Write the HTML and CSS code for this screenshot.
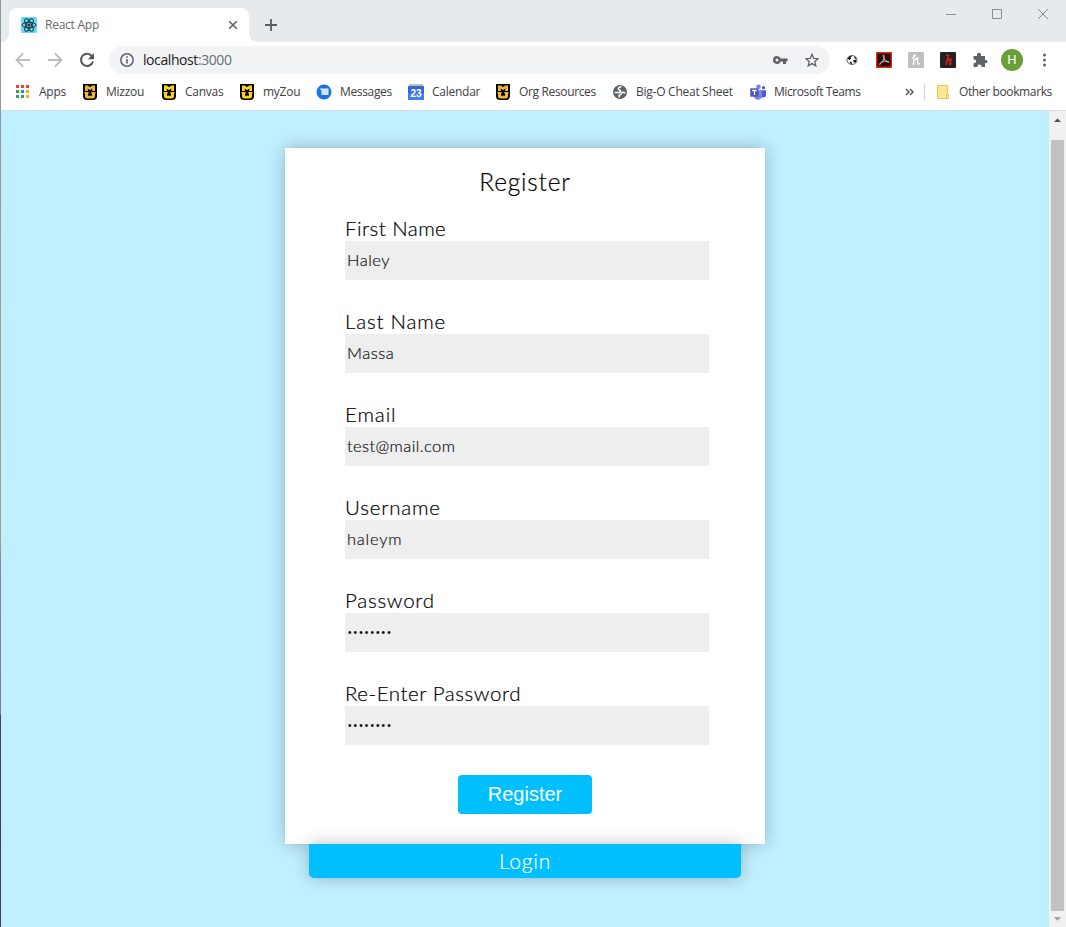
FILE: index.html
```html
<!DOCTYPE html>
<html lang="en">
<head>
<meta charset="utf-8">
<title>React App</title>
<link rel="stylesheet" href="styles.css">
</head>
<body>
<svg class="defs" width="0" height="0">
  <symbol id="mu" viewBox="0 0 16 16">
    <path d="M1 0h14v12q0 4-4 4H5q-4 0-4-4z" fill="#050505"/>
    <path d="M3 1.500h2.800L8 3.300l2.200-1.800H13V7h-2.800V4.600L8 6.300 5.800 4.600V7H3zM2.500 8h4.200v1.600H6v2.200h4V9.600h-.7V8h4.200v1.600H13V12q0 2.500-2.500 2.500h-5Q3 14.500 3 12V9.600h-.5z" fill="currentColor"/>
  </symbol>
</svg>
<div class="window">
  <header class="tabstrip">
    <div class="tab">
      <svg class="favicon" width="16" height="16" viewBox="0 0 16 16"><rect width="16" height="16" rx="1.500" fill="#61dafb"/><g fill="none" stroke="#222f38" stroke-width="1"><ellipse cx="8" cy="8" rx="7" ry="2.700"/><ellipse cx="8" cy="8" rx="7" ry="2.700" transform="rotate(60 8 8)"/><ellipse cx="8" cy="8" rx="7" ry="2.700" transform="rotate(120 8 8)"/></g><circle cx="8" cy="8" r="1.500" fill="#222f38"/></svg>
      <span class="tab-title">React App</span>
      <svg class="tab-close" width="10" height="10" viewBox="0 0 10 10"><path d="M1.200 1.200l7.600 7.600M8.800 1.200L1.200 8.800" stroke="#5f6368" stroke-width="1.600"/></svg>
    </div>
    <svg class="new-tab" width="12" height="12" viewBox="0 0 12 12"><path d="M6 0v12M0 6h12" stroke="#5a5e62" stroke-width="1.800"/></svg>
    <div class="window-buttons">
      <svg width="11" height="11" viewBox="0 0 11 11"><path d="M0 5.500h10" stroke="#8b8e90"/></svg>
      <svg width="11" height="11" viewBox="0 0 11 11"><path d="M.5.500h9v9h-9z" fill="none" stroke="#8b8e90"/></svg>
      <svg width="11" height="11" viewBox="0 0 11 11"><path d="M0 0l10 10M10 0L0 10" stroke="#85888a"/></svg>
    </div>
  </header>

  <div class="toolbar">
    <svg class="nav" width="16" height="16" viewBox="0 0 16 16"><path d="M15 8H2M8 1.500L1.500 8 8 14.500" fill="none" stroke="#babcbe" stroke-width="1.800"/></svg>
    <svg class="nav" width="16" height="16" viewBox="0 0 16 16"><path d="M1 8h13M8 1.500L14.500 8 8 14.500" fill="none" stroke="#babcbe" stroke-width="1.800"/></svg>
    <svg class="nav" width="16" height="16" viewBox="0 0 16 16"><path d="M13.200 4.400A6.100 6.100 0 1 0 14 9.500" fill="none" stroke="#54585d" stroke-width="2"/><path d="M15 1v6.200H8.800z" fill="#54585d"/></svg>
    <div class="omnibox">
      <svg width="14" height="14" viewBox="0 0 14 14"><circle cx="7" cy="7" r="6.200" fill="none" stroke="#5f6368" stroke-width="1.500"/><path d="M7 6v4.500M7 3.300v1.500" stroke="#5f6368" stroke-width="1.600"/></svg>
      <span class="url">localhost<span class="port">:3000</span></span>
      <svg class="key" width="15" height="8" viewBox="0 0 15 8"><path d="M4 0a4 4 0 1 0 3.700 5.500H10V8h3V5.500h1.500v-3H7.700A4 4 0 0 0 4 0zm0 2.500a1.500 1.500 0 1 1 0 3 1.500 1.500 0 0 1 0-3z" fill="#5f6368" fill-rule="evenodd"/></svg>
      <svg width="14" height="14" viewBox="0 0 14 14"><path d="M7 1.300l1.700 4 4.400.4-3.300 2.900 1 4.300L7 10.600l-3.800 2.300 1-4.300L.9 5.700l4.400-.4z" fill="none" stroke="#5f6368" stroke-width="1.300"/></svg>
    </div>
    <div class="extensions">
      <svg width="16" height="16" viewBox="0 0 16 16"><ellipse cx="8" cy="8" rx="5" ry="4.500" fill="#fff" stroke="#333" stroke-width=".8"/><path d="M3.500 6.500L6 4l2 .3-1.500 1.500.5 1L5.500 8zM5.500 9.500l2 .5.500 2-1.500-.2zM10 4l2.500 2-1.500 1.200zM9.500 8l3-.3-1 3-2-.7z" fill="#111"/></svg>
      <svg width="16" height="16" viewBox="0 0 16 16"><path d="M.7.700h14.600v14.600H.7z" fill="#2b0a08" stroke="#e02a10" stroke-width="1.400"/><path d="M7.500 3c-1 0 .2 3 1.500 5s4 3 4 2-4-1.200-6-.5-4 2.500-3.500 3S7.500 9 8 5.500C8.200 4 8 3 7.500 3z" fill="none" stroke="#e8dedb" stroke-width=".8"/></svg>
      <svg width="16" height="16" viewBox="0 0 16 16"><rect width="16" height="16" rx="1.500" fill="#bfbfbf"/><path d="M4 6.500Q7 5 7.300 3.500 6 2 5.800 4.500V12M5.800 9q3-3 3.800-1v4q1.500.5 2.400-1M4 12h3M7.500 6.200h3.500" fill="none" stroke="#fff" stroke-width="1.200"/></svg>
      <svg width="16" height="16" viewBox="0 0 16 16"><rect width="16" height="16" rx="1" fill="#222"/><path d="M6 3.200h2.500L6 13M7 9.500Q10.500 5.500 11 7.500L9.800 12q.7 1 1.700-.8" fill="none" stroke="#db1d20" stroke-width="1.500"/></svg>
      <svg width="16" height="16" viewBox="0 0 16 16"><path d="M1.500 4H5C4.500 1.500 6 .7 7 .7S9.500 1.500 9 4h4v4c2-.5 2.500.7 2.500 1.500S15 11.500 13 11v4H9.500c.2-2-.8-2.600-2-2.600S5.300 13 5.500 15h-4v-3.800c2 .2 2.600-.8 2.600-1.900S3.300 7.300 1.500 7.500z" fill="#5f6368"/></svg>
      <span class="avatar">H</span>
      <svg class="menu" width="4" height="14" viewBox="0 0 4 14" fill="#5f6368"><circle cx="2.500" cy="2" r="1.500"/><circle cx="2.500" cy="7" r="1.500"/><circle cx="2.500" cy="12" r="1.500"/></svg>
    </div>
  </div>

  <nav class="bookmarks">
    <a class="bm apps"><svg width="16" height="16" viewBox="0 0 16 16"><path d="M1 1h3v3H1zM6 1h3v3H6zM11 1h3v3h-3z" fill="#ea4335"/><path d="M1 6h3v3H1zM1 11h3v3H1zM6 11h3v3H6z" fill="#34a054"/><path d="M6 6h3v3H6z" fill="#1a86f0"/><path d="M11 6h3v3h-3zM11 11h3v3h-3z" fill="#f9ab13"/></svg><span>Apps</span></a>
    <a class="bm mizzou"><svg class="mu amber" width="16" height="16"><use href="#mu"/></svg><span>Mizzou</span></a>
    <a class="bm canvas"><svg class="mu" width="16" height="16"><use href="#mu"/></svg><span>Canvas</span></a>
    <a class="bm myzou"><svg class="mu" width="16" height="16"><use href="#mu"/></svg><span>myZou</span></a>
    <a class="bm messages"><svg width="16" height="16" viewBox="0 0 16 16"><circle cx="8" cy="8" r="7.500" fill="#1a73e8"/><path d="M3.500 4.500h9v6.500H5.500V6.500z" fill="#dce8fb"/><path d="M6 6.800h5M6 9h5" stroke="#c4d9f8"/></svg><span>Messages</span></a>
    <a class="bm calendar"><svg width="16" height="16" viewBox="0 0 16 16"><path d="M1 0h14v3H1z" fill="#bdbdbd"/><path d="M0 2h16v14H0z" fill="#3367d6"/><path d="M0 9h16v7H0z" fill="#4280ef"/><text x="8" y="12.500" text-anchor="middle" class="day">23</text></svg><span>Calendar</span></a>
    <a class="bm org"><svg class="mu amber" width="16" height="16"><use href="#mu"/></svg><span>Org Resources</span></a>
    <a class="bm bigo"><svg width="16" height="16" viewBox="0 0 16 16"><circle cx="8" cy="8" r="7" fill="#5f6368"/><path d="M9.500 2.700c-2.500 0-3.500 1.300-3 2.300s2 .8 2 2-1 1.500-2.500 1.500H2.700M13.200 9c-1.500-1-3-1-3.500 0s-1 1.800-2 2-1 1.500 0 2.200" fill="none" stroke="#fff" stroke-width="1.600"/></svg><span>Big-O Cheat Sheet</span></a>
    <a class="bm teams"><svg width="16" height="16" viewBox="0 0 16 16"><circle cx="8.500" cy="2.700" r="2.300" fill="#7b83eb"/><circle cx="13.500" cy="3.700" r="1.600" fill="#5059c9"/><path d="M10.500 6.200H16V11q0 2.500-3 2.500h-2.500z" fill="#5059c9"/><path d="M4 6.200h8V12q-.5 3.700-4 3.700T4 12z" fill="#7b83eb"/><path d="M.3 4.300h8.200v8.400H.3z" fill="#4b53bc"/><path d="M2.200 6.500h4.500M4.450 6.500v4.500" stroke="#fff" stroke-width="1.300"/></svg><span>Microsoft Teams</span></a>
    <svg class="more" width="9" height="8" viewBox="0 0 9 8"><path d="M1 1l3 3-3 3M5 1l3 3-3 3" fill="none" stroke="#54585d" stroke-width="1.500"/></svg>
    <span class="rule"></span>
    <a class="bm other"><svg width="16" height="16" viewBox="0 0 16 16"><path d="M2.500 1.500h10v13h-10z" fill="#ffe594" stroke="#eac64b"/><path d="M11.500 10.500h2v4h-2z" fill="#ffe594" stroke="#eac64b"/></svg><span>Other bookmarks</span></a>
  </nav>

  <div class="viewport">
    <main class="page">
      <form class="card">
        <h1>Register</h1>
        <div class="field"><label class="l-first">First Name</label><div class="input v-haley">Haley</div></div>
        <div class="field"><label class="l-last">Last Name</label><div class="input v-massa">Massa</div></div>
        <div class="field"><label class="l-email">Email</label><div class="input v-mail">test@mail.com</div></div>
        <div class="field"><label class="l-user">Username</label><div class="input v-haleym">haleym</div></div>
        <div class="field"><label class="l-pass">Password</label><div class="input dots">••••••••</div></div>
        <div class="field"><label class="l-re">Re-Enter Password</label><div class="input dots">••••••••</div></div>
        <button type="button" class="submit">Register</button>
      </form>
      <a class="login">Login</a>
    </main>
    <aside class="scrollbar">
      <svg width="17" height="17" viewBox="0 0 17 17"><path d="M5 11h7L8.500 7.500z" fill="#505050"/></svg>
      <span class="thumb"></span>
      <svg width="17" height="16" viewBox="0 0 17 16"><path d="M5 6h7l-3.500 4z" fill="#a3a3a3"/></svg>
    </aside>
  </div>
</div>
</body>
</html>
```
FILE: styles.css
```css
* { box-sizing: border-box; }
body { margin: 0; width: 1066px; height: 927px; overflow: hidden; background: linear-gradient(#8d979c 0, #8d979c 110px, #a39a95 250px, #ac9a92 540px, #858b90 560px, #777d82 714px, #42434c 716px, #3f414b 927px); font-family: "Open Sans", sans-serif; }
svg { display: block; flex: none; }
.defs { position: absolute; }
.window { margin-left: 1px; height: 927px; display: flex; flex-direction: column; background: #fff; }

.tabstrip { height: 42px; flex: none; display: flex; align-items: flex-start; background: #e7eaed; padding-left: 8px; }
.tab { position: relative; width: 240px; height: 34px; margin-top: 8px; padding: 0 11px 0 12px; display: flex; align-items: center; background: #fff; border-radius: 8px 8px 0 0; }
.tab::before, .tab::after { content: ""; position: absolute; bottom: 0; width: 8px; height: 8px; }
.tab::before { left: -8px; background: radial-gradient(circle at 0 0, transparent 7.500px, #fff 8px); }
.tab::after { right: -8px; background: radial-gradient(circle at 100% 0, transparent 7.500px, #fff 8px); }
.tab-title { margin-left: 8px; padding-bottom: 1px; flex: 1; font-size: 12px; color: #64686c; letter-spacing: -0.25px; }
.new-tab { margin: 19px 0 0 16px; }
.window-buttons { margin: 9px 17px 0 auto; display: flex; gap: 35px; }

.toolbar { height: 36px; flex: none; display: flex; align-items: center; padding-left: 14px; }
.nav { margin-right: 16px; }
.omnibox { width: 721px; height: 28px; margin-left: -2px; padding: 0 11px; border-radius: 14px; background: #f1f3f4; display: flex; align-items: center; }
.url { margin-left: 9px; padding-bottom: 1px; flex: 1; font-size: 14px; color: #202124; letter-spacing: -0.42px; }
.port { color: #6b6f73; }
.key { margin-right: 17px; }
.extensions { display: flex; align-items: center; gap: 16px; margin-left: 14px; }
.avatar { width: 22px; height: 22px; margin: 0 -3px; border-radius: 50%; background: #689f38; color: #fff; font: 13px/22px Roboto, sans-serif; text-align: center; }
.menu { margin-left: 6px; }

.bookmarks { height: 33px; flex: none; display: flex; align-items: center; padding: 0 0 5px 14px; border-bottom: 1px solid #d9dce0; font-size: 12px; color: #3c4043; }
.bm { display: flex; align-items: center; gap: 8px; white-space: nowrap; flex: none; }
.bm span { letter-spacing: -0.25px; }
.apps { width: 67px; }
.mizzou { width: 79px; }
.canvas { width: 78px; }
.myzou { width: 77px; }
.messages { width: 92px; }
.messages span { letter-spacing: -0.35px; }
.calendar { width: 87px; }
.org { width: 117px; }
.org span { letter-spacing: -0.35px; }
.bigo { width: 138px; }
.teams { width: 155px; }
.teams span { letter-spacing: -0.42px; }
.other span { letter-spacing: -0.37px; }
.mu { color: #fbd31a; }
.amber { color: #f2b237; }
.day { font: bold 10px "Liberation Sans", sans-serif; fill: #fff; }
.rule { width: 1px; height: 16px; background: #cfd1d4; margin: 0 10px 0 10px; }

.viewport { flex: 1; display: flex; }
.page { flex: 1; padding-top: 37px; display: flex; flex-direction: column; align-items: center; background: #c0efff; font-family: Lato, sans-serif; font-weight: 300; color: #000; }
.card { width: 480px; height: 696px; padding: 19px 56px 30px 60px; display: flex; flex-direction: column; background: #fff; box-shadow: 0 0 16px rgba(0, 0, 0, .25); }
h1 { margin: 0 0 19px -4px; font-size: 24.5px; line-height: 30px; font-weight: 300; text-align: center; letter-spacing: .8px; -webkit-text-stroke: .2px #000; }
.field { height: 93px; flex: none; }
label { display: block; height: 25px; font-size: 20.5px; line-height: 24px; -webkit-text-stroke: .2px #000; }
.l-first { letter-spacing: .45px; }
.l-last { letter-spacing: .8px; }
.l-email { letter-spacing: .9px; }
.l-user { letter-spacing: .8px; }
.l-pass { letter-spacing: .75px; }
.l-re { letter-spacing: .55px; }
.input { height: 39px; padding-left: 2px; background: #eee; font-size: 16.5px; line-height: 39px; color: #111; letter-spacing: .5px; -webkit-text-stroke: .2px #111; }
.v-mail { letter-spacing: .4px; }
.v-haleym { letter-spacing: .75px; }
.dots { padding-left: 3px; color: #000; font: 10px/39px "Liberation Sans", sans-serif; letter-spacing: 2.100px; -webkit-text-stroke: 0; }
.submit { width: 134px; height: 39px; flex: none; margin: 1px 0 0 113px; padding: 0; border: 0; border-radius: 4px; background: #00bfff; color: #fff; font: 20px "Liberation Sans", sans-serif; }
.login { position: relative; width: 432px; height: 34px; border-radius: 0 0 5px 5px; background: #00bfff; box-shadow: 0 0 16px rgba(0, 0, 0, .25); color: #fff; font-size: 21px; line-height: 33px; letter-spacing: .8px; text-align: center; -webkit-text-stroke: .2px #fff; }

.scrollbar { width: 17px; display: flex; flex-direction: column; align-items: center; background: #f1f1f1; }
.thumb { width: 13px; flex: 1; margin-top: 12px; background: #c1c1c1; }
```
